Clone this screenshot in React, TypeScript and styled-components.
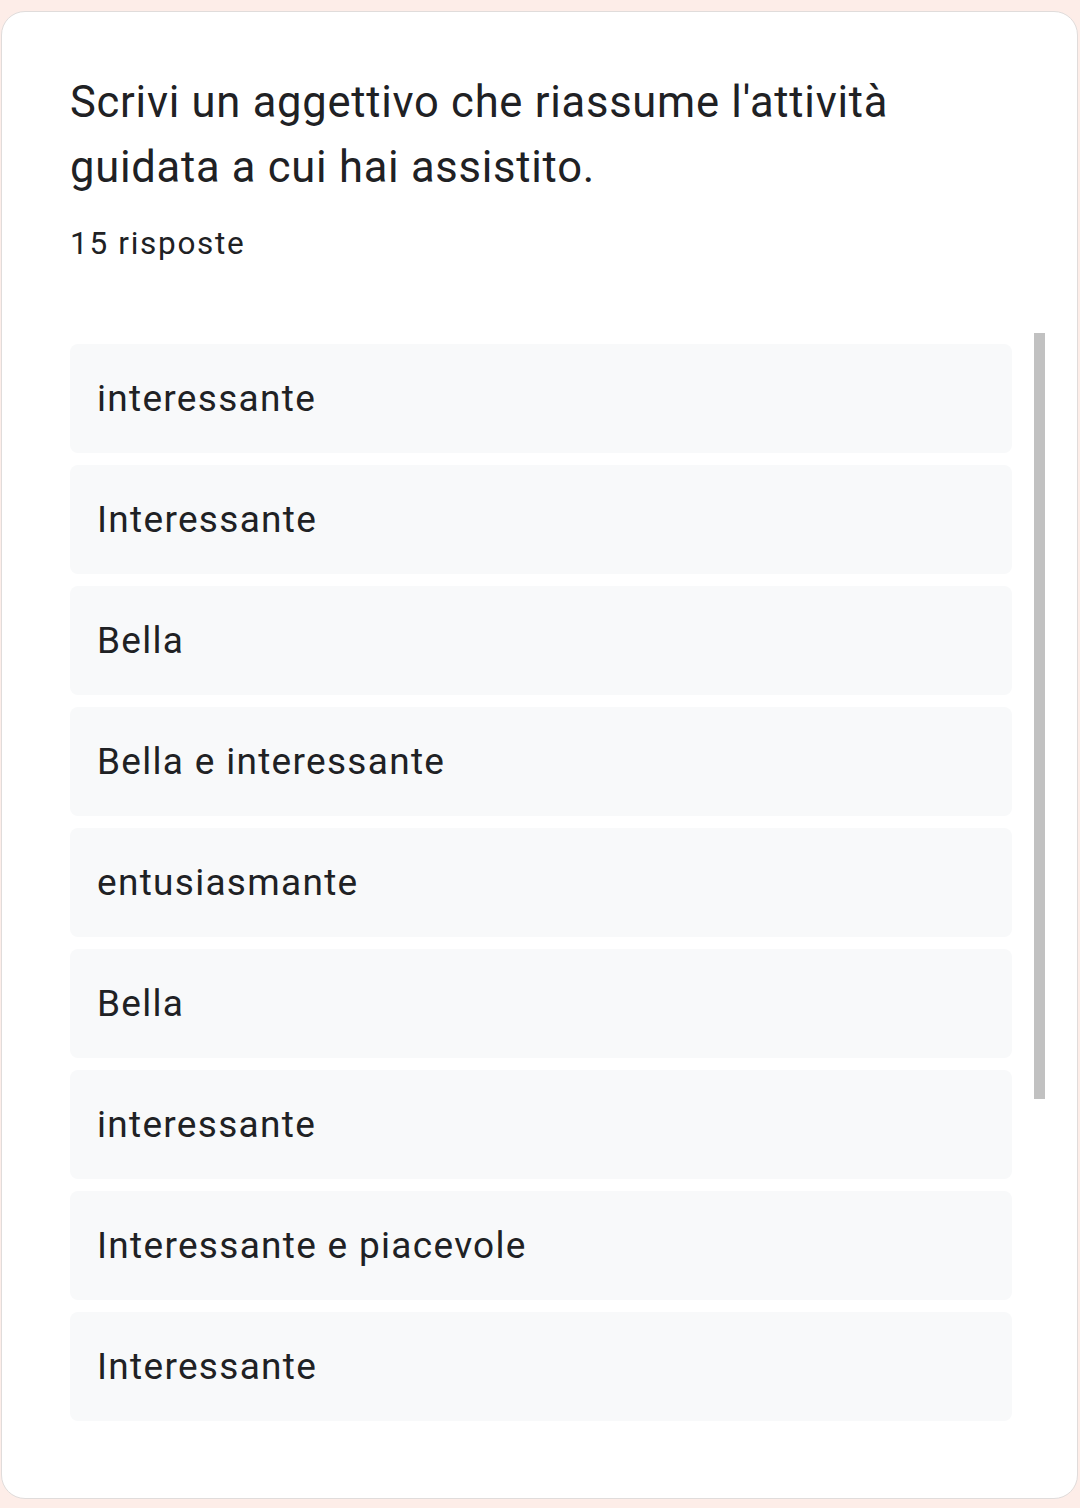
import React from 'react';
import styled, { createGlobalStyle } from 'styled-components';

const answers = [
  'interessante',
  'Interessante',
  'Bella',
  'Bella e interessante',
  'entusiasmante',
  'Bella',
  'interessante',
  'Interessante e piacevole',
  'Interessante',
];

const GlobalStyle = createGlobalStyle`
  body {
    margin: 0;
    background: #fdede8;
    font-family: Roboto, "Noto Sans", sans-serif;
    -webkit-font-smoothing: antialiased;
  }
`;

const Card = styled.div`
  margin: 11px 2px 10px 1px;
  background: #fff;
  border: 1px solid #e0dcdb;
  border-radius: 24px;
  padding: 58px 32px 77px 68px;
  color: #202124;
`;

const Title = styled.h2`
  margin: 0;
  padding-right: 60px;
  font-size: 43.5px;
  font-weight: 400;
  line-height: 65px;
  letter-spacing: 0.75px;
`;

const Count = styled.div`
  margin-top: 24px;
  font-size: 31.5px;
  line-height: 40px;
  letter-spacing: 1.7px;
`;

const ListArea = styled.div`
  margin-top: 69px;
  display: flex;
  align-items: flex-start;
  gap: 22px;
`;

const Items = styled.div`
  flex: 1;
  display: flex;
  flex-direction: column;
  gap: 12px;
  padding-top: 11px;
`;

const Item = styled.div`
  height: 109px;
  display: flex;
  align-items: center;
  padding-left: 27px;
  background: #f8f9fa;
  border-radius: 8px;
  font-size: 37px;
  letter-spacing: 1.3px;
`;

const Thumb = styled.div`
  width: 11px;
  height: 766px;
  background: #c1c1c1;
`;

export default function App() {
  return (
    <>
      <GlobalStyle />
      <Card>
        <Title>Scrivi un aggettivo che riassume l'attività guidata a cui hai assistito.</Title>
        <Count>15 risposte</Count>
        <ListArea>
          <Items>
            {answers.map((a, i) => (
              <Item key={i}>{a}</Item>
            ))}
          </Items>
          <Thumb />
        </ListArea>
      </Card>
    </>
  );
}
